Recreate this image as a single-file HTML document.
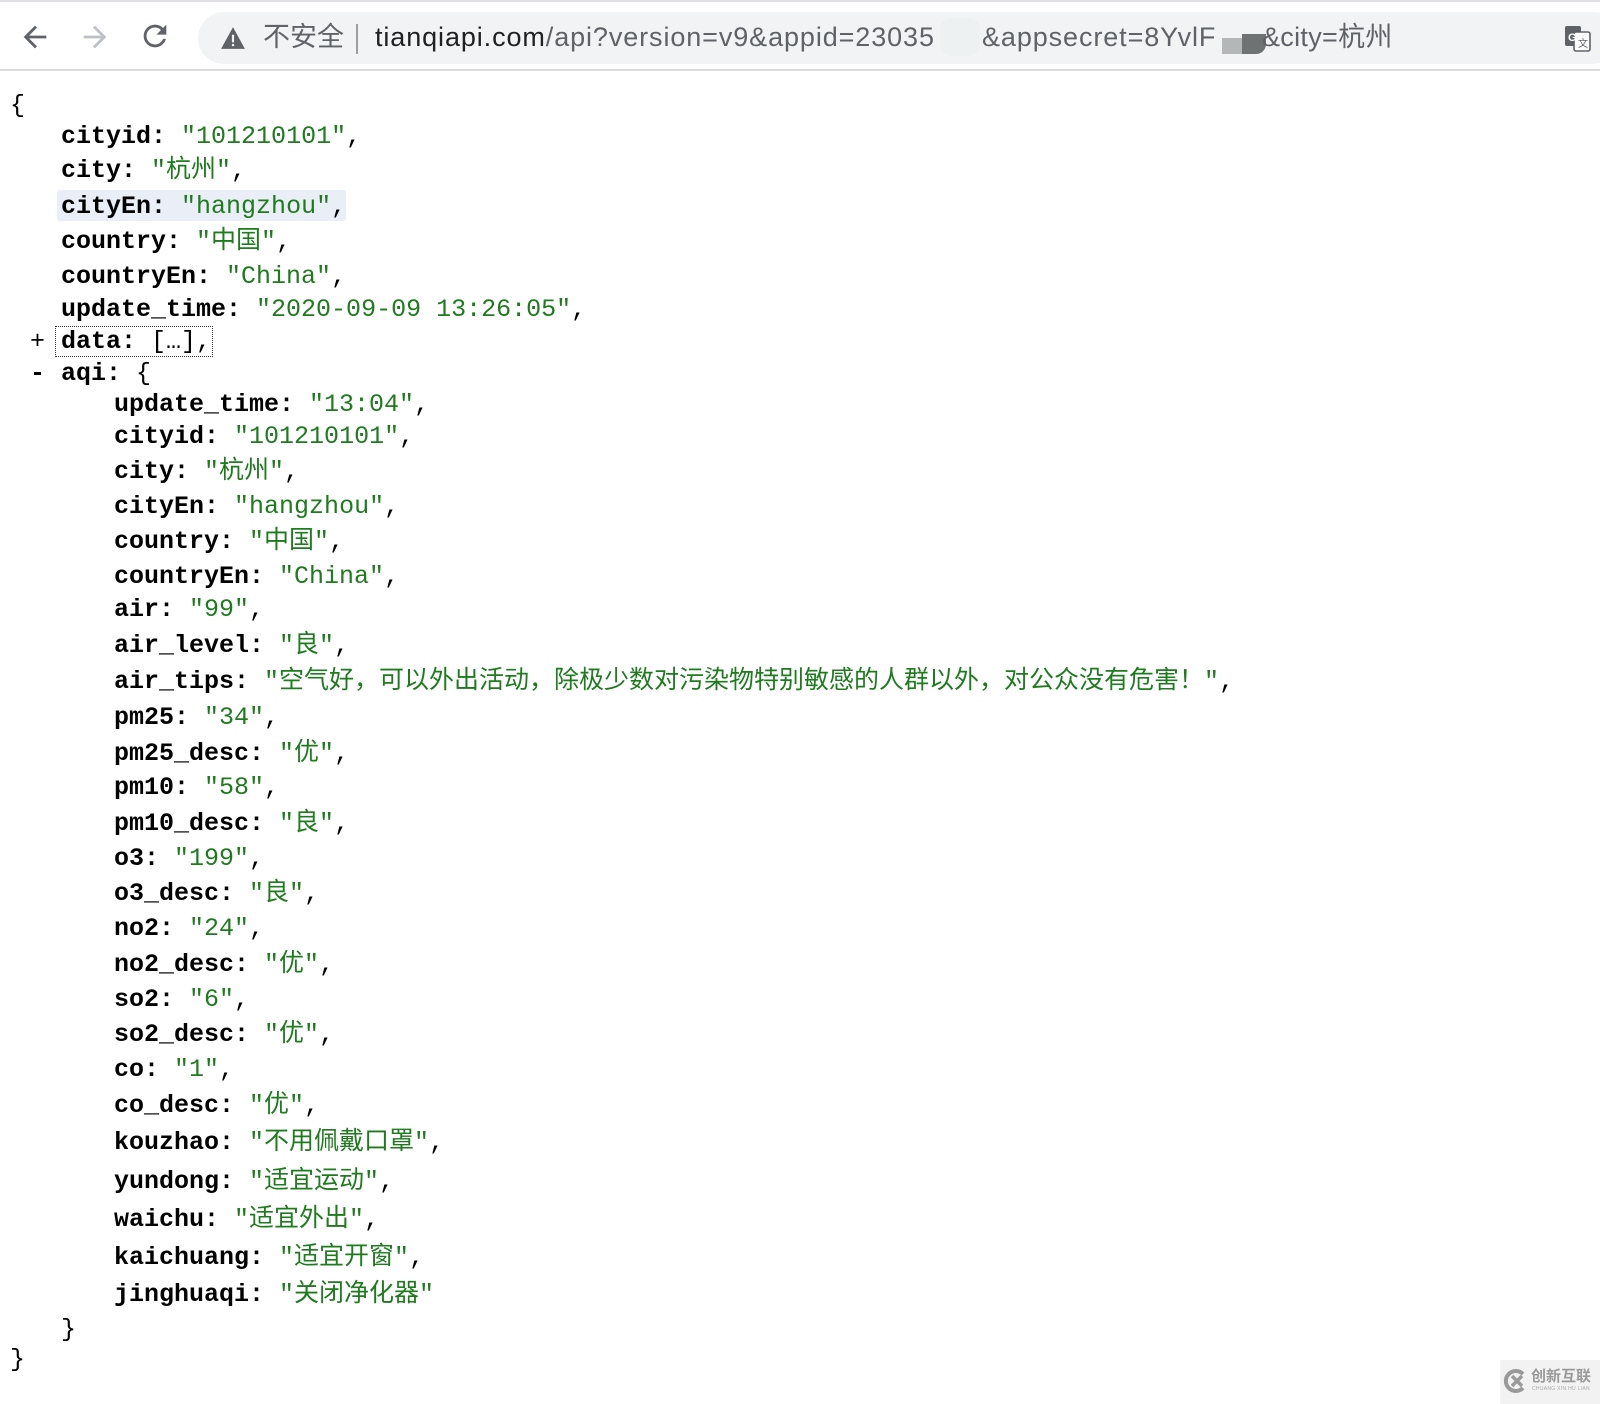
<!DOCTYPE html>
<html><head><meta charset="utf-8">
<style>
html,body{margin:0;padding:0;background:#fff;}
body{width:1600px;height:1404px;position:relative;overflow:hidden;font-family:"Liberation Mono","Noto Sans CJK SC",monospace;}
.top{position:absolute;left:0;top:0;width:1600px;height:71px;background:#fff;border-top:2px solid #dfe1e5;border-bottom:2px solid #dadce0;box-sizing:border-box;}
.pill{position:absolute;left:198px;top:10px;width:1420px;height:52px;border-radius:26px;background:#f1f3f4;}
.u{position:absolute;top:13px;font-family:"Liberation Sans","Noto Sans CJK SC",sans-serif;font-size:27px;letter-spacing:0.9px;line-height:44px;color:#202124;white-space:nowrap;}
.g{color:#5f6368}
.l{position:absolute;height:30px;line-height:30px;font-size:25px;white-space:pre;color:#000;}
.l b{font-weight:bold;}
.s{color:#1e7b1e;font-family:"Liberation Mono","Noto Sans CJK SC",monospace;}
.k1{left:61px}.k2{left:114px}
.w{position:absolute;left:0;top:3px;width:1600px;height:1400px;}
</style></head><body>
<div class="top">
 <svg style="position:absolute;left:18px;top:18px" width="34" height="34" viewBox="0 0 24 24"><path d="M20 11H7.8l5.6-5.6L12 4l-8 8 8 8 1.4-1.4L7.8 13H20z" fill="#5f6368"/></svg>
 <svg style="position:absolute;left:78px;top:18px" width="34" height="34" viewBox="0 0 24 24"><path d="M4 11h12.2l-5.6-5.6L12 4l8 8-8 8-1.4-1.4 5.6-5.6H4z" fill="#bdc1c6"/></svg>
 <svg style="position:absolute;left:138px;top:17px" width="34" height="34" viewBox="0 0 24 24"><path d="M17.65 6.35A7.96 7.96 0 0 0 12 4a8 8 0 1 0 7.73 10h-2.08A6 6 0 1 1 12 6c1.66 0 3.14.69 4.22 1.78L13 11h7V4z" fill="#5f6368"/></svg>
 <div class="pill"></div>
 <svg style="position:absolute;left:220px;top:24px" width="26" height="24" viewBox="0 0 24 22"><path d="M12 1L1 21h22z" fill="#5f6368"/><rect x="11" y="8" width="2" height="7" fill="#f1f3f4"/><rect x="11" y="16.5" width="2" height="2" fill="#f1f3f4"/></svg>
 <div class="u g" style="left:263px;letter-spacing:0">不安全</div>
 <div style="position:absolute;left:356px;top:22px;width:2px;height:30px;background:#9aa0a6"></div>
 <div class="u" style="left:375px">tianqiapi.com<span class="g">/api?version=v9&amp;appid=23035</span></div>
 <div style="position:absolute;left:940px;top:16px;width:40px;height:38px;background:#eef1f1;border-radius:12px"></div>
 <div class="u g" style="left:982px">&amp;appsecret=8YvlF</div>
 <div style="position:absolute;left:1222px;top:36px;width:22px;height:16px;background:#b4b7b7"></div>
 <div style="position:absolute;left:1242px;top:32px;width:24px;height:20px;background:#6f7272;border-radius:0 0 10px 0"></div>
 <div class="u g" style="left:1262px;letter-spacing:0.3px">&amp;city=杭州</div>
 <svg style="position:absolute;left:1564px;top:23px" width="28" height="28" viewBox="0 0 28 28"><rect x="1" y="1" width="16" height="20" rx="2" fill="#5f6368"/><rect x="10" y="7" width="16" height="19" rx="2" fill="#fff" stroke="#5f6368" stroke-width="1.6"/><text x="4" y="16" font-size="11" font-weight="bold" fill="#fff" font-family="Liberation Sans">G</text><text x="14" y="22" font-size="10" fill="#5f6368" font-family="Noto Sans CJK SC">文</text></svg>
</div>

<div class="w">
<div style="position:absolute;left:57px;top:187px;width:289px;height:31px;background:#e9eef7;border-radius:3px"></div>
<div style="position:absolute;left:55px;top:323px;width:158px;height:31px;border:1px dotted #333;box-sizing:border-box"></div>

<div class="l" style="left:10px;top:88px">{</div>
<div class="l k1" style="top:119px"><b>cityid:</b> <span class="s">"101210101"</span>,</div>
<div class="l k1" style="top:153px"><b>city:</b> <span class="s">"杭州"</span>,</div>
<div class="l k1" style="top:189px"><b>cityEn:</b> <span class="s">"hangzhou"</span>,</div>
<div class="l k1" style="top:224px"><b>country:</b> <span class="s">"中国"</span>,</div>
<div class="l k1" style="top:259px"><b>countryEn:</b> <span class="s">"China"</span>,</div>
<div class="l k1" style="top:292px"><b>update_time:</b> <span class="s">"2020-09-09 13:26:05"</span>,</div>
<div class="l" style="left:30px;top:324px">+</div>
<div class="l k1" style="top:324px"><b>data:</b> […],</div>
<div class="l" style="left:30px;top:356px"><b>-</b></div>
<div class="l k1" style="top:356px"><b>aqi:</b> {</div>
<div class="l k2" style="top:387px"><b>update_time:</b> <span class="s">"13:04"</span>,</div>
<div class="l k2" style="top:419px"><b>cityid:</b> <span class="s">"101210101"</span>,</div>
<div class="l k2" style="top:454px"><b>city:</b> <span class="s">"杭州"</span>,</div>
<div class="l k2" style="top:489px"><b>cityEn:</b> <span class="s">"hangzhou"</span>,</div>
<div class="l k2" style="top:524px"><b>country:</b> <span class="s">"中国"</span>,</div>
<div class="l k2" style="top:559px"><b>countryEn:</b> <span class="s">"China"</span>,</div>
<div class="l k2" style="top:592px"><b>air:</b> <span class="s">"99"</span>,</div>
<div class="l k2" style="top:628px"><b>air_level:</b> <span class="s">"良"</span>,</div>
<div class="l k2" style="top:664px"><b>air_tips:</b> <span class="s">"空气好，可以外出活动，除极少数对污染物特别敏感的人群以外，对公众没有危害！"</span>,</div>
<div class="l k2" style="top:700px"><b>pm25:</b> <span class="s">"34"</span>,</div>
<div class="l k2" style="top:736px"><b>pm25_desc:</b> <span class="s">"优"</span>,</div>
<div class="l k2" style="top:770px"><b>pm10:</b> <span class="s">"58"</span>,</div>
<div class="l k2" style="top:806px"><b>pm10_desc:</b> <span class="s">"良"</span>,</div>
<div class="l k2" style="top:841px"><b>o3:</b> <span class="s">"199"</span>,</div>
<div class="l k2" style="top:876px"><b>o3_desc:</b> <span class="s">"良"</span>,</div>
<div class="l k2" style="top:911px"><b>no2:</b> <span class="s">"24"</span>,</div>
<div class="l k2" style="top:947px"><b>no2_desc:</b> <span class="s">"优"</span>,</div>
<div class="l k2" style="top:982px"><b>so2:</b> <span class="s">"6"</span>,</div>
<div class="l k2" style="top:1017px"><b>so2_desc:</b> <span class="s">"优"</span>,</div>
<div class="l k2" style="top:1052px"><b>co:</b> <span class="s">"1"</span>,</div>
<div class="l k2" style="top:1088px"><b>co_desc:</b> <span class="s">"优"</span>,</div>
<div class="l k2" style="top:1125px"><b>kouzhao:</b> <span class="s">"不用佩戴口罩"</span>,</div>
<div class="l k2" style="top:1164px"><b>yundong:</b> <span class="s">"适宜运动"</span>,</div>
<div class="l k2" style="top:1202px"><b>waichu:</b> <span class="s">"适宜外出"</span>,</div>
<div class="l k2" style="top:1240px"><b>kaichuang:</b> <span class="s">"适宜开窗"</span>,</div>
<div class="l k2" style="top:1277px"><b>jinghuaqi:</b> <span class="s">"关闭净化器"</span></div>
<div class="l" style="left:61px;top:1312px">}</div>
<div class="l" style="left:10px;top:1342px">}</div>
</div>

<div style="position:absolute;left:1500px;top:1360px;width:100px;height:44px;background:#f2f2f2"></div>
<svg style="position:absolute;left:1503px;top:1368px" width="26" height="26" viewBox="0 0 26 26"><path d="M20 6A10 10 0 1 0 20 20" fill="none" stroke="#9a9a9a" stroke-width="4"/><path d="M9 8l10 10M19 8L9 18" stroke="#9a9a9a" stroke-width="3.5"/></svg>
<div style="position:absolute;left:1531px;top:1367px;font-family:'Noto Sans CJK SC',sans-serif;font-size:15px;line-height:18px;color:#999;font-weight:bold">创新互联</div>
<div style="position:absolute;left:1532px;top:1386px;font-family:'Liberation Sans',sans-serif;font-size:5px;color:#aaa;letter-spacing:0.3px">CHUANG XIN HU LIAN</div>
</body></html>
